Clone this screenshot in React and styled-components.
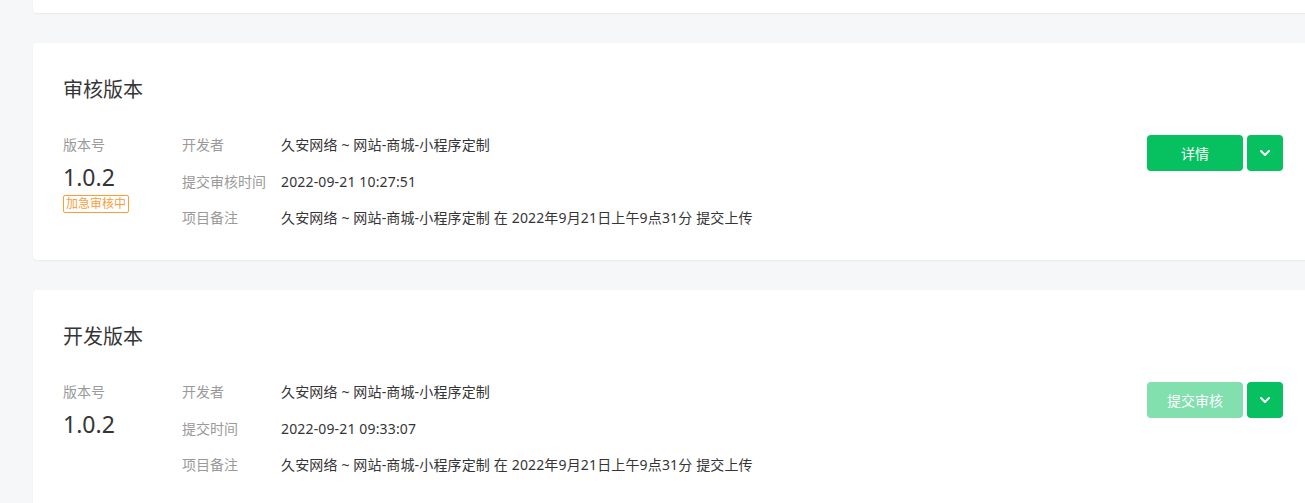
import React from "react";
import styled, { createGlobalStyle } from "styled-components";

const GlobalStyle = createGlobalStyle`
  html, body {
    margin: 0;
    padding: 0;
    background: #f6f7f9;
    overflow: hidden;
  }
  body {
    font-family: "Noto Sans", "Noto Sans CJK SC", sans-serif;
    color: #353535;
  }
`;

const Page = styled.div`
  display: flex;
  flex-direction: column;
  gap: 30px;
  padding-left: 33px;
  width: 1280px;
`;

const Card = styled.section`
  background: #fff;
  border-radius: ${(p) => (p.$clipped ? "0 0 4px 4px" : "4px")};
  box-shadow: 0 1px 2px rgba(0, 0, 0, 0.06);
  height: ${(p) => (p.$clipped ? "13px" : "auto")};
  padding: ${(p) => (p.$clipped ? "0" : "33px 30px 31px")};
  box-sizing: border-box;
`;

const Title = styled.h2`
  margin: 0;
  font-size: 20px;
  line-height: 28px;
  font-weight: 400;
  color: #353535;
`;

const Body = styled.div`
  display: flex;
  align-items: flex-start;
  margin-top: 30px;
`;

const VersionCol = styled.div`
  width: 119px;
  display: flex;
  flex-direction: column;
  align-items: flex-start;
`;

const VersionLabel = styled.div`
  font-size: 14px;
  line-height: 22px;
  color: #9a9a9a;
`;

const VersionNum = styled.div`
  font-size: 23px;
  line-height: 32px;
  margin-top: 5px;
  color: #353535;
`;

const Badge = styled.span`
  margin-top: 2px;
  font-size: 12px;
  line-height: 16px;
  padding: 0 2px;
  border: 1px solid #fa9d3b;
  border-radius: 2px;
  color: #fa9d3b;
`;

const Info = styled.dl`
  flex: 1;
  margin: 0;
  display: grid;
  grid-template-columns: 99px 1fr;
  row-gap: 14.5px;
  font-size: 14px;
  line-height: 22px;
`;

const Label = styled.dt`
  color: #9a9a9a;
`;

const Value = styled.dd`
  margin: 0;
  color: #353535;
  letter-spacing: 0.15px;
`;

const Actions = styled.div`
  display: flex;
  gap: 4px;
  margin-top: 1px;
`;

const Button = styled.button`
  height: 36px;
  width: ${(p) => (p.$square ? "36px" : "96px")};
  border: none;
  border-radius: 4px;
  background: #07c160;
  color: #fff;
  font-family: inherit;
  font-size: 14px;
  display: flex;
  align-items: center;
  justify-content: center;
  padding: 0;
  opacity: ${(p) => (p.disabled ? 0.5 : 1)};
  cursor: ${(p) => (p.disabled ? "not-allowed" : "pointer")};
`;

const Chevron = () => (
  <svg width="12" height="8" viewBox="0 0 12 8" fill="none">
    <polyline
      points="2,2 6,6 10,2"
      stroke="#fff"
      strokeWidth="2"
      strokeLinecap="round"
      strokeLinejoin="round"
    />
  </svg>
);

const NAME = "久安网络 ~ 网站-商城-小程序定制";
const NOTE = `${NAME} 在 2022年9月21日上午9点31分 提交上传`;

function VersionCard({ title, timeLabel, time, badge, actionLabel, disabled }) {
  return (
    <Card>
      <Title>{title}</Title>
      <Body>
        <VersionCol>
          <VersionLabel>版本号</VersionLabel>
          <VersionNum>1.0.2</VersionNum>
          {badge && <Badge>{badge}</Badge>}
        </VersionCol>
        <Info>
          <Label>开发者</Label>
          <Value>{NAME}</Value>
          <Label>{timeLabel}</Label>
          <Value>{time}</Value>
          <Label>项目备注</Label>
          <Value>{NOTE}</Value>
        </Info>
        <Actions>
          <Button disabled={disabled}>{actionLabel}</Button>
          <Button $square>
            <Chevron />
          </Button>
        </Actions>
      </Body>
    </Card>
  );
}

export default function App() {
  return (
    <>
      <GlobalStyle />
      <Page>
        <Card $clipped />
        <VersionCard
          title="审核版本"
          timeLabel="提交审核时间"
          time="2022-09-21 10:27:51"
          badge="加急审核中"
          actionLabel="详情"
        />
        <VersionCard
          title="开发版本"
          timeLabel="提交时间"
          time="2022-09-21 09:33:07"
          actionLabel="提交审核"
          disabled
        />
      </Page>
    </>
  );
}
